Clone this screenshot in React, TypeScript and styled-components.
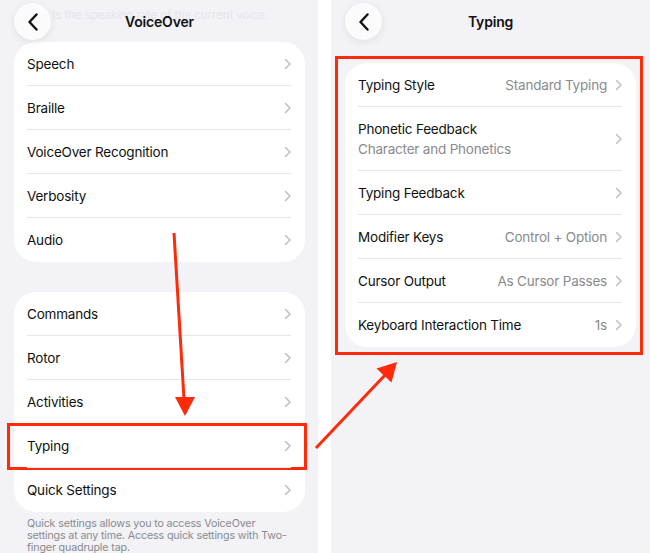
import styled, { createGlobalStyle } from "styled-components";

const GlobalStyle = createGlobalStyle`
  html, body {
    margin: 0;
    padding: 0;
    background: #ffffff;
  }
  body {
    font-family: Inter, "Noto Sans", "Liberation Sans", sans-serif;
    -webkit-font-smoothing: antialiased;
  }
`;

const Canvas = styled.div`
  position: relative;
  width: 650px;
  height: 553px;
  overflow: hidden;
  display: flex;
  gap: 13px;
  background: #ffffff;
`;

const Phone = styled.div<{ $width: number }>`
  width: ${(p) => p.$width}px;
  height: 553px;
  flex-shrink: 0;
  background: #f2f2f7;
  display: flex;
  flex-direction: column;
  padding: 0 ${(p) => (p.$width > 318 ? 14 : 13)}px 0 14px;
  box-sizing: border-box;
`;

const NavBar = styled.div`
  position: relative;
  height: 42px;
  display: flex;
  align-items: center;
  justify-content: center;
  flex-shrink: 0;
`;

const Ghost = styled.span`
  position: absolute;
  left: 38px;
  top: 8px;
  font-size: 11.5px;
  letter-spacing: -0.1px;
  color: #e6e6ea;
  white-space: nowrap;
`;

const BackButton = styled.div`
  position: absolute;
  left: 0;
  top: 3px;
  width: 37px;
  height: 37px;
  border-radius: 50%;
  background: #fbfbfc;
  box-shadow: 0 2px 8px rgba(0, 0, 0, 0.08);
  display: flex;
  align-items: center;
  justify-content: center;
`;

const Title = styled.span`
  position: relative;
  font-size: 14px;
  font-weight: 600;
  letter-spacing: -0.2px;
  color: #111;
`;

const Card = styled.div`
  background: #ffffff;
  border-radius: 22px;
`;

const CardGap = styled.div<{ $h: number }>`
  height: ${(p) => p.$h}px;
  flex-shrink: 0;
`;

const Row = styled.div<{ $tall?: boolean; $last?: boolean }>`
  position: relative;
  height: ${(p) => (p.$tall ? 64 : 44)}px;
  display: flex;
  align-items: center;
  padding: 0 13px;
  box-sizing: border-box;
  &::after {
    content: "";
    display: ${(p) => (p.$last ? "none" : "block")};
    position: absolute;
    left: 13px;
    right: 14px;
    bottom: 0;
    height: 1px;
    background: #e6e6ea;
  }
`;

const Labels = styled.div`
  flex: 1;
  display: flex;
  flex-direction: column;
  gap: 4px;
  margin-top: -1px;
`;

const Label = styled.span`
  font-size: 13.5px;
  letter-spacing: -0.2px;
  color: #111;
`;

const Sub = styled.span`
  font-size: 13.5px;
  letter-spacing: -0.2px;
  color: #8a8a8e;
`;

const Value = styled.span`
  font-size: 13.5px;
  letter-spacing: -0.2px;
  color: #8a8a8e;
  margin-right: 8px;
  margin-top: -1px;
`;

const Footer = styled.p`
  margin: 6px 0 0;
  padding: 0 0 0 13px;
  font-size: 10.7px;
  line-height: 12px;
  letter-spacing: -0.15px;
  white-space: nowrap;
  color: #8a8a8e;
`;

const Highlight = styled.div`
  position: absolute;
  left: -7px;
  right: -2px;
  top: -1px;
  bottom: -2px;
  border: 3px solid #ff2a0a;
  pointer-events: none;
`;

const Frame = styled.div`
  margin-top: 14px;
  margin-left: -10px;
  margin-right: -7px;
  padding: 4px 4px 5px 7px;
  border: 3px solid #ff2a0a;
`;

const Arrows = styled.svg`
  position: absolute;
  left: 0;
  top: 0;
  pointer-events: none;
`;

function Chevron() {
  return (
    <svg width="8" height="12" viewBox="0 0 8 12">
      <path d="M1.5 1.5 L6 6 L1.5 10.5" fill="none" stroke="#c2c2c6" strokeWidth="1.6" strokeLinecap="round" strokeLinejoin="round" />
    </svg>
  );
}

function BackIcon() {
  return (
    <svg width="12" height="18" viewBox="0 0 12 18">
      <path d="M9.5 1.5 L2.5 9 L9.5 16.5" fill="none" stroke="#111" strokeWidth="2.4" strokeLinecap="round" strokeLinejoin="round" />
    </svg>
  );
}

type Item = { label: string; value?: string; sub?: string; mark?: boolean };

function Group({ items }: { items: Item[] }) {
  return (
    <Card>
      {items.map((it, i) => (
        <Row key={it.label} $tall={!!it.sub} $last={i === items.length - 1}>
          <Labels>
            <Label>{it.label}</Label>
            {it.sub ? <Sub>{it.sub}</Sub> : null}
          </Labels>
          {it.value ? <Value>{it.value}</Value> : null}
          <Chevron />
          {it.mark ? <Highlight /> : null}
        </Row>
      ))}
    </Card>
  );
}

const first: Item[] = [
  { label: "Speech" },
  { label: "Braille" },
  { label: "VoiceOver Recognition" },
  { label: "Verbosity" },
  { label: "Audio" },
];

const second: Item[] = [
  { label: "Commands" },
  { label: "Rotor" },
  { label: "Activities" },
  { label: "Typing", mark: true },
  { label: "Quick Settings" },
];

const typing: Item[] = [
  { label: "Typing Style", value: "Standard Typing" },
  { label: "Phonetic Feedback", sub: "Character and Phonetics" },
  { label: "Typing Feedback" },
  { label: "Modifier Keys", value: "Control + Option" },
  { label: "Cursor Output", value: "As Cursor Passes" },
  { label: "Keyboard Interaction Time", value: "1s" },
];

export default function App() {
  return (
    <>
      <GlobalStyle />
      <Canvas>
        <Phone $width={318}>
          <NavBar>
            <Ghost>ts the speaking rate of the current voice.</Ghost>
            <BackButton>
              <BackIcon />
            </BackButton>
            <Title>VoiceOver</Title>
          </NavBar>
          <Group items={first} />
          <CardGap $h={30} />
          <Group items={second} />
          <Footer>
            Quick settings allows you to access VoiceOver
            <br />
            settings at any time. Access quick settings with Two-
            <br />
            finger quadruple tap.
          </Footer>
        </Phone>
        <Phone $width={319}>
          <NavBar>
            <BackButton>
              <BackIcon />
            </BackButton>
            <Title>Typing</Title>
          </NavBar>
          <Frame>
            <Group items={typing} />
          </Frame>
        </Phone>
        <Arrows width="650" height="553" viewBox="0 0 650 553">
          <line x1="174" y1="233" x2="184" y2="399" stroke="#ff2a0a" strokeWidth="3" />
          <polygon points="175,397 195,397 185,416" fill="#ff2a0a" />
          <line x1="316" y1="448" x2="386" y2="374" stroke="#ff2a0a" strokeWidth="3" />
          <polygon points="397,362 391.5,382.5 376.5,368.5" fill="#ff2a0a" />
        </Arrows>
      </Canvas>
    </>
  );
}
